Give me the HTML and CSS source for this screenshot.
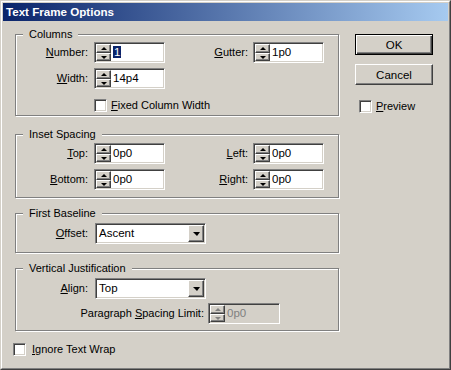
FILE: index.html
```html
<!DOCTYPE html>
<html lang="en">
<head>
    <meta charset="UTF-8">
    <title>Text Frame Options</title>
    <link rel="stylesheet" href="styles.css">
</head>
<body>
    <div class="window">
        <div class="frame">
            <div class="titlebar">Text Frame Options</div>
            <div class="client">
                <div class="main">
                    <div class="group g-columns">
                        <span class="legend">Columns</span>
                        <div class="row">
                            <span class="lbl"><u>N</u>umber:</span>
                            <div class="spin">
                                <div class="spin-btns"><span class="up"></span><span class="down"></span></div>
                                <div class="spin-val"><span class="sel">1</span></div>
                            </div>
                            <span class="lbl lbl-r"><u>G</u>utter:</span>
                            <div class="spin">
                                <div class="spin-btns"><span class="up"></span><span class="down"></span></div>
                                <div class="spin-val">1p0</div>
                            </div>
                        </div>
                        <div class="row">
                            <span class="lbl"><u>W</u>idth:</span>
                            <div class="spin">
                                <div class="spin-btns"><span class="up"></span><span class="down"></span></div>
                                <div class="spin-val">14p4</div>
                            </div>
                        </div>
                        <div class="check-row fixed">
                            <span class="box"></span><span><u>F</u>ixed Column Width</span>
                        </div>
                    </div>

                    <div class="group g-inset">
                        <span class="legend">Inset Spacing</span>
                        <div class="row">
                            <span class="lbl"><u>T</u>op:</span>
                            <div class="spin">
                                <div class="spin-btns"><span class="up"></span><span class="down"></span></div>
                                <div class="spin-val">0p0</div>
                            </div>
                            <span class="lbl lbl-r"><u>L</u>eft:</span>
                            <div class="spin">
                                <div class="spin-btns"><span class="up"></span><span class="down"></span></div>
                                <div class="spin-val">0p0</div>
                            </div>
                        </div>
                        <div class="row">
                            <span class="lbl"><u>B</u>ottom:</span>
                            <div class="spin">
                                <div class="spin-btns"><span class="up"></span><span class="down"></span></div>
                                <div class="spin-val">0p0</div>
                            </div>
                            <span class="lbl lbl-r"><u>R</u>ight:</span>
                            <div class="spin">
                                <div class="spin-btns"><span class="up"></span><span class="down"></span></div>
                                <div class="spin-val">0p0</div>
                            </div>
                        </div>
                    </div>

                    <div class="group g-baseline">
                        <span class="legend">First Baseline</span>
                        <div class="row">
                            <span class="lbl"><u>O</u>ffset:</span>
                            <div class="combo">
                                <div class="combo-val">Ascent</div>
                                <span class="combo-btn"><span class="down-lg"></span></span>
                            </div>
                        </div>
                    </div>

                    <div class="group g-vjust">
                        <span class="legend">Vertical Justification</span>
                        <div class="row">
                            <span class="lbl"><u>A</u>lign:</span>
                            <div class="combo">
                                <div class="combo-val">Top</div>
                                <span class="combo-btn"><span class="down-lg"></span></span>
                            </div>
                        </div>
                        <div class="row">
                            <span class="lbl lbl-wide">Paragraph <u>S</u>pacing Limit:</span>
                            <div class="spin disabled">
                                <div class="spin-btns"><span class="up"></span><span class="down"></span></div>
                                <div class="spin-val">0p0</div>
                            </div>
                        </div>
                    </div>

                    <div class="check-row ignore">
                        <span class="box"></span><span><u>I</u>gnore Text Wrap</span>
                    </div>
                </div>

                <div class="side">
                    <button class="btn btn-default">OK</button>
                    <button class="btn">Cancel</button>
                    <div class="check-row preview">
                        <span class="box"></span><span><u>P</u>review</span>
                    </div>
                </div>
            </div>
        </div>
    </div>
</body>
</html>
```

FILE: styles.css
```css
* {
    margin: 0;
    padding: 0;
    box-sizing: border-box;
}
body {
    font-family: 'Liberation Sans', Arial, sans-serif;
    font-size: 11px;
    line-height: 13px;
    color: #000;
    background-color: #d4d0c8;
}
u {
    text-decoration: underline;
    text-underline-offset: 1px;
}
.window {
    width: 451px;
    height: 370px;
    border: 1px solid;
    border-color: #d4d0c8 #404040 #404040 #d4d0c8;
    background-color: #d4d0c8;
}
.frame {
    height: 100%;
    border: 1px solid;
    border-color: #fff #808080 #808080 #fff;
    padding: 1px;
}
.titlebar {
    height: 18px;
    padding-left: 3px;
    background: linear-gradient(to right, #0a246a, #a6caf0);
    color: #fff;
    font-weight: bold;
    font-size: 11.6px;
    line-height: 18px;
}
.client {
    display: flex;
    padding: 13px 0 0 10px;
}
.main {
    width: 327px;
}
.side {
    margin-left: 15px;
    display: flex;
    flex-direction: column;
}

/* etched group frames */
.group {
    position: relative;
    width: 324px;
    margin-left: 2px;
    border: 1px solid #808080;
    box-shadow: inset 1px 1px #fff, 1px 1px #fff;
}
.legend {
    position: absolute;
    top: -7px;
    left: 7px;
    padding: 0 6px;
    background-color: #d4d0c8;
}
.g-columns {
    height: 82px;
    padding-top: 7px;
}
.g-inset {
    height: 64px;
    margin-top: 18px;
    padding-top: 8px;
}
.g-baseline {
    height: 40px;
    margin-top: 15px;
    padding-top: 9px;
}
.g-vjust {
    height: 63px;
    margin-top: 15px;
    padding-top: 9px;
}
.row {
    display: flex;
    align-items: center;
    height: 21px;
    margin-bottom: 5px;
}
.g-vjust .row {
    margin-bottom: 4px;
}
.lbl {
    width: 72px;
    text-align: right;
    margin-right: 6px;
    flex-shrink: 0;
}
.lbl-r {
    width: 83px;
    margin-left: 0;
    margin-right: 5px;
}
.lbl-wide {
    width: 188px;
    margin-right: 4px;
}

/* sunken field */
.spin, .combo {
    display: flex;
    height: 21px;
    padding: 1px;
    border: 1px solid;
    border-color: #808080 #fff #fff #808080;
    box-shadow: inset 1px 1px #404040, inset -1px -1px #d4d0c8;
    background-color: #fff;
}
.spin {
    width: 71px;
}
.spin-btns {
    display: flex;
    flex-direction: column;
    width: 15px;
    flex-shrink: 0;
}
.spin-btns span {
    display: flex;
    align-items: center;
    justify-content: center;
    background-color: #d4d0c8;
    border: 1px solid;
    border-color: #fff #404040 #404040 #fff;
    box-shadow: inset -1px -1px #808080;
}
.spin-btns .up {
    height: 9px;
}
.spin-btns .down {
    height: 8px;
}
.spin-btns .up::after {
    content: "";
    border-left: 3px solid transparent;
    border-right: 3px solid transparent;
    border-bottom: 3px solid #000;
}
.spin-btns .down::after {
    content: "";
    border-left: 3px solid transparent;
    border-right: 3px solid transparent;
    border-top: 3px solid #000;
}
.spin-val {
    flex: 1;
    padding-left: 2px;
    line-height: 17px;
    font-size: 11.5px;
}
.sel {
    background-color: #0a246a;
    color: #fff;
    padding: 0 1px;
}
.spin.disabled {
    width: 72px;
    background-color: #d4d0c8;
}
.spin.disabled .spin-val {
    color: #808080;
}
.spin.disabled .up::after {
    border-bottom-color: #808080;
}
.spin.disabled .down::after {
    border-top-color: #808080;
}

.combo {
    width: 111px;
    margin-left: 1px;
}
.combo-val {
    flex: 1;
    padding-left: 2px;
    line-height: 17px;
    font-size: 11.5px;
}
.combo-btn {
    display: flex;
    align-items: center;
    justify-content: center;
    width: 16px;
    background-color: #d4d0c8;
    border: 1px solid;
    border-color: #fff #404040 #404040 #fff;
    box-shadow: inset -1px -1px #808080;
}
.down-lg {
    border-left: 4px solid transparent;
    border-right: 3px solid transparent;
    border-top: 4px solid #000;
}

/* checkboxes */
.check-row {
    display: flex;
    align-items: center;
    height: 13px;
}
.box {
    width: 13px;
    height: 13px;
    margin-right: 4px;
    border: 1px solid;
    border-color: #808080 #fff #fff #808080;
    box-shadow: inset 1px 1px #404040, inset -1px -1px #d4d0c8;
    background-color: #fff;
    flex-shrink: 0;
}
.fixed {
    margin-top: 10px;
    margin-left: 78px;
}
.ignore {
    margin-top: 12px;
    gap: 2px;
}
.preview {
    margin-top: 15px;
    margin-left: 4px;
}

/* push buttons */
.btn {
    width: 78px;
    height: 21px;
    font-family: 'Liberation Sans', Arial, sans-serif;
    font-size: 11.5px;
    color: #000;
    background-color: #d4d0c8;
    border: 1px solid;
    border-color: #fff #404040 #404040 #fff;
    box-shadow: inset -1px -1px #808080;
}
.btn + .btn {
    margin-top: 9px;
}
.btn-default {
    border: 1px solid #000;
    box-shadow: inset 1px 1px #fff, inset -1px -1px #404040, inset -2px -2px #808080;
}
```
